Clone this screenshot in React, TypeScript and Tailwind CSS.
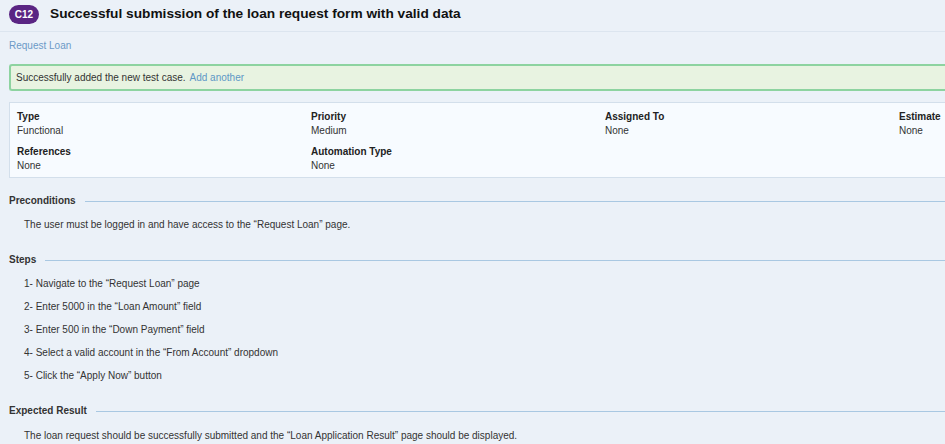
import React from "react";

const font = { fontFamily: '"Liberation Sans", Arial, sans-serif' };

function Field({ label, value }: { label: string; value: string }) {
  return (
    <div className="flex flex-col">
      <span className="text-[10px] font-bold leading-[14px] text-[#222]">{label}</span>
      <span className="text-[10px] leading-[14px] text-[#333]">{value}</span>
    </div>
  );
}

function SectionHeading({ title }: { title: string }) {
  return (
    <div className="flex items-center gap-[9px]">
      <span className="text-[10px] leading-[14px] font-bold text-[#333] whitespace-nowrap">{title}</span>
      <div className="h-px flex-1 bg-[#a9c8e2]" />
    </div>
  );
}

export default function App() {
  return (
    <div className="w-[945px] h-[444px] overflow-hidden bg-[#ebf1f8] text-[#333]" style={font}>
      <div className="flex items-center gap-[11px] h-[32px] pl-[9px] pb-[2px] border-b border-[#dce5ef]">
        <span className="inline-flex items-center justify-center w-[30px] h-[19px] rounded-full bg-[#5a2583] text-white text-[10px] font-bold">C12</span>
        <h1 className="text-[13.7px] font-bold text-[#111] whitespace-nowrap">Successful submission of the loan request form with valid data</h1>
      </div>
      <div className="pl-[9px]">
        <div className="mt-[7px] text-[10px] leading-[14px] text-[#6b9ac7]">Request Loan</div>
        <div className="mt-[11px] h-[27px] flex items-center pl-[5px] border-2 border-r-0 border-[#8dd3a0] rounded-l-[3px] bg-[#e8f3e1] text-[10px]">
          <span className="text-[#333]">Successfully added the new test case.</span>
          <span className="ml-1 text-[#5e97c6]">Add another</span>
        </div>
        <div className="mt-[11px] h-[76px] border border-r-0 border-[#d3dfeb] bg-[#f7fbff] pl-[7px] pt-[7px] flex flex-col gap-[7px]">
          <div className="grid grid-cols-[294px_294px_294px_200px]">
            <Field label="Type" value="Functional" />
            <Field label="Priority" value="Medium" />
            <Field label="Assigned To" value="None" />
            <Field label="Estimate" value="None" />
          </div>
          <div className="grid grid-cols-[294px_294px_294px_200px]">
            <Field label="References" value="None" />
            <Field label="Automation Type" value="None" />
          </div>
        </div>
        <div className="mt-[16px]">
          <SectionHeading title="Preconditions" />
          <p className="mt-[10px] pl-[15px] text-[10px] leading-[14px]">The user must be logged in and have access to the “Request Loan” page.</p>
        </div>
        <div className="mt-[21px]">
          <SectionHeading title="Steps" />
          <div className="mt-[10px] pl-[15px] flex flex-col gap-[9px] text-[10px] leading-[14px]">
            <p>1- Navigate to the “Request Loan” page</p>
            <p>2- Enter 5000 in the “Loan Amount” field</p>
            <p>3- Enter 500 in the “Down Payment” field</p>
            <p>4- Select a valid account in the “From Account” dropdown</p>
            <p>5- Click the “Apply Now” button</p>
          </div>
        </div>
        <div className="mt-[21px]">
          <SectionHeading title="Expected Result" />
          <p className="mt-[11px] pl-[15px] text-[10px] leading-[14px]">The loan request should be successfully submitted and the “Loan Application Result” page should be displayed.</p>
        </div>
      </div>
    </div>
  );
}
